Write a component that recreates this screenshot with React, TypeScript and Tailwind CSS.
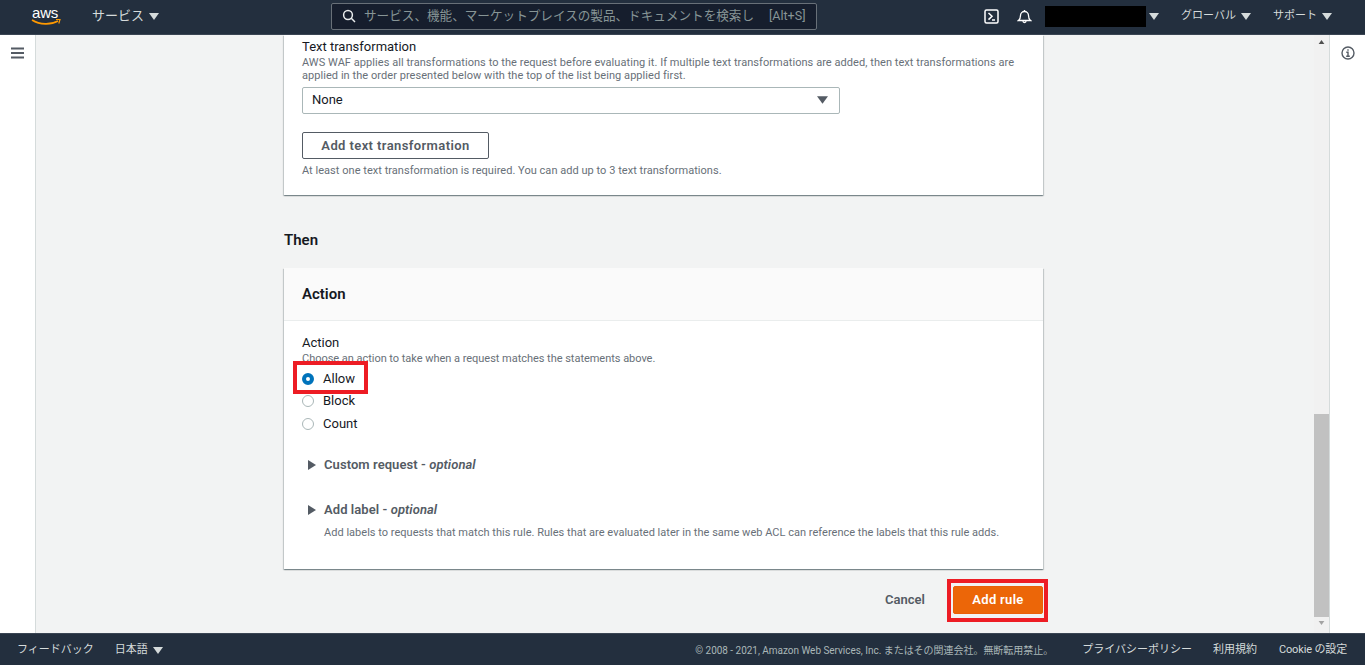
import React from "react";

const font = { fontFamily: 'Roboto, "Noto Sans CJK JP", sans-serif' };

function Caret({ className = "" }: { className?: string }) {
  return (
    <svg className={className} width="10" height="7" viewBox="0 0 10 7" fill="currentColor">
      <path d="M0 0h10L5 7z" />
    </svg>
  );
}

function Expand({ label }: { label: string }) {
  return (
    <div className="flex items-center h-[20px] text-[13px] font-semibold tracking-[0.07px] text-[#545b64] leading-[20px]">
      <svg className="ml-[6px] mr-[8px]" width="8" height="10" viewBox="0 0 8 10" fill="#545b64">
        <path d="M0 0l8 5L0 10z" />
      </svg>
      <span>
        {label} - <i>optional</i>
      </span>
    </div>
  );
}

function Radio({ label, checked = false }: { label: string; checked?: boolean }) {
  return (
    <div className="flex items-center h-[22px] text-[13px] text-[#16191f]">
      {checked ? (
        <span className="w-[12px] h-[12px] rounded-full border-[4px] border-[#0073bb] bg-white" />
      ) : (
        <span className="w-[12px] h-[12px] rounded-full border border-[#aab7b8] bg-white" />
      )}
      <span className="ml-[9px]">{label}</span>
    </div>
  );
}

export default function App() {
  return (
    <div style={font} className="w-[1365px] h-[665px] flex flex-col overflow-hidden bg-white">
      <header className="h-[35px] shrink-0 bg-[#232f3e] border-b border-[#3a4553] pb-[2px] flex items-center text-white">
        <div className="w-[92px] pl-[31px] flex flex-col items-start">
          <span className="text-[15px] leading-[13px] font-medium tracking-[-0.2px] pl-[1px]" style={{ fontFamily: '"Liberation Sans", sans-serif' }}>aws</span>
          <svg width="30" height="7" viewBox="0 0 30 7" fill="none">
            <path d="M1 1c8 5 19 5 26 1" stroke="#f90" strokeWidth="1.6" />
            <path d="M25 0.500l4 0-1.200 4" stroke="#f90" strokeWidth="1.2" />
          </svg>
        </div>
        <span className="text-[13px] text-[#d5dbdb]">サービス</span>
        <Caret className="ml-[5px] text-[#d5dbdb]" />
        <div className="ml-[172px] w-[486px] h-[27px] rounded-[2px] border border-[#687078] bg-[#161e2d] flex items-center pl-[10px] text-[12.6px] text-[#879596] whitespace-nowrap">
          <svg width="14" height="14" viewBox="0 0 14 14" fill="none" stroke="#eaeded" strokeWidth="1.5" className="shrink-0">
            <circle cx="6" cy="6" r="4.400" />
            <path d="M9.300 9.300l3.700 3.700" />
          </svg>
          <span className="ml-[8px] w-[405px]">サービス、機能、マーケットプレイスの製品、ドキュメントを検索し</span>
          <span className="text-[12.5px]">[Alt+S]</span>
        </div>
        <svg className="ml-[167px]" width="15" height="15" viewBox="0 0 15 15" fill="none" stroke="#fff" strokeWidth="1.5">
          <rect x="1" y="1" width="13" height="13" rx="1.500" />
          <path d="M4.500 4l3.500 3.300-3.500 3.300M8 11h3" />
        </svg>
        <svg className="ml-[18px]" width="15" height="15" viewBox="0 0 15 15" fill="none" stroke="#fff" strokeWidth="1.300">
          <path d="M1.500 11.500c2-1.500 2-3 2-5a4 4 0 018 0c0 2 0 3.500 2 5z" />
          <path d="M6 12c0 2 3 2 3 0" />
          <path d="M7.500 1v1.500" />
        </svg>
        <div className="ml-[13px] w-[101px] h-[21px] bg-black" />
        <Caret className="ml-[3px] text-[#d5dbdb]" />
        <span className="ml-[22px] text-[11px] text-[#d5dbdb]">グローバル</span>
        <Caret className="ml-[5px] text-[#d5dbdb]" />
        <span className="ml-[22px] text-[11px] text-[#d5dbdb]">サポート</span>
        <Caret className="ml-[5px] text-[#d5dbdb]" />
      </header>

      <div className="flex-1 flex min-h-0">
        <aside className="w-[36px] shrink-0 border-r border-[#d5dbdb] flex justify-center pt-[12px]">
          <svg width="13" height="12" viewBox="0 0 13 12" stroke="#545b64" strokeWidth="2">
            <path d="M0 1.500h13M0 6h13M0 10.500h13" />
          </svg>
        </aside>

        <main className="flex-1 min-w-0 bg-[#f2f3f3] overflow-hidden flex flex-col pl-[248px]">
          <div className="w-[759px] bg-white shadow-[0_1px_1px_0_rgba(0,28,36,0.3),1px_1px_1px_0_rgba(0,28,36,0.15),-1px_1px_1px_0_rgba(0,28,36,0.15)] px-[18px] pt-[3px] h-[160px]">
            <div className="text-[13px] leading-[18px] text-[#16191f]">Text transformation</div>
            <p className="text-[11px] leading-[13px] tracking-[0.055px] text-[#687078]">
              AWS WAF applies all transformations to the request before evaluating it. If multiple text transformations are added, then text transformations are
              <br />
              applied in the order presented below with the top of the list being applied first.
            </p>
            <div className="mt-[5px] w-[538px] h-[27px] rounded-[2px] border border-[#aab7b8] pb-[2px] flex items-center justify-between pl-[9px] pr-[11px] text-[13px] text-[#16191f]">
              <span>None</span>
              <Caret className="text-[#545b64] w-[11px] h-[8px] mt-[1px]" />
            </div>
            <button className="mt-[18px] block w-[187px] h-[27px] rounded-[2px] border border-[#545b64] text-[13px] font-semibold tracking-[0.4px] text-[#545b64]">
              Add text transformation
            </button>
            <p className="mt-[5px] text-[11px] leading-[14px] tracking-[0.035px] text-[#687078]">
              At least one text transformation is required. You can add up to 3 text transformations.
            </p>
          </div>

          <h2 className="mt-[35px] ml-0 text-[15px] leading-[20px] font-semibold text-[#16191f]">Then</h2>

          <section className="mt-[18px] w-[759px] h-[301px] bg-white shadow-[0_1px_1px_0_rgba(0,28,36,0.3),1px_1px_1px_0_rgba(0,28,36,0.15),-1px_1px_1px_0_rgba(0,28,36,0.15)]">
            <div className="h-[53px] bg-[#fafafa] border-b border-[#eaeded] flex items-center px-[18px] text-[15px] font-semibold text-[#16191f]">
              Action
            </div>
            <div className="px-[18px] pt-[13px]">
              <div className="text-[13px] leading-[18px] text-[#16191f]">Action</div>
              <p className="text-[11px] leading-[12px] mt-[1px] tracking-[-0.03px] text-[#687078]">Choose an action to take when a request matches the statements above.</p>
              <div className="mt-[3px]">
                <Radio label="Allow" checked />
                <Radio label="Block" />
                <div className="mt-[1px]"><Radio label="Count" /></div>
              </div>
              <div className="mt-[20px]"><Expand label="Custom request" /></div>
              <div className="mt-[25px]"><Expand label="Add label" /></div>
              <p className="mt-[6px] ml-[22px] text-[11px] leading-[14px] tracking-[0.02px] text-[#687078]">
                Add labels to requests that match this rule. Rules that are evaluated later in the same web ACL can reference the labels that this rule adds.
              </p>
            </div>
          </section>

          <div className="w-[759px] flex items-center justify-end mt-[17px]">
            <span className="text-[13px] font-semibold text-[#545b64] mr-[28px]">Cancel</span>
            <button className="w-[90px] h-[28px] rounded-[2px] bg-[#ec6608] border border-[#eb5f07] text-[13px] font-semibold tracking-[0.3px] text-white">Add rule</button>
          </div>
        </main>

        <div className="w-[15px] shrink-0 bg-[#f1f1f1] flex flex-col">
          <Caret className="mx-auto mt-[5px] w-[7px] h-[4px] rotate-180 text-[#505050]" />
          <div className="mt-[370px] h-[203px] bg-[#c1c1c1]" />
          <Caret className="mx-auto mt-[4px] w-[7px] h-[4px] text-[#a3a3a3]" />
        </div>
        <aside className="w-[36px] shrink-0 border-l border-[#d5dbdb] flex justify-center pt-[11px]">
          <svg width="14" height="14" viewBox="0 0 14 14" fill="none" stroke="#545b64" strokeWidth="1.400">
            <circle cx="7" cy="7" r="6" />
            <path d="M5.300 6.300h1.700v3.700M5.200 10.200h3.600M7 3.200v1.600" />
          </svg>
        </aside>
      </div>

      <footer className="h-[32px] shrink-0 bg-[#232f3e] border-t border-[#3a4553] pt-[2px] flex items-center text-[11px] text-[#d5dbdb]">
        <span className="ml-[17px]">フィードバック</span>
        <span className="ml-[21px]">日本語</span>
        <Caret className="ml-[5px]" />
        <span className="ml-auto text-[10px] tracking-[-0.03px] text-[#aab7b8]">© 2008 - 2021, Amazon Web Services, Inc. またはその関連会社。無断転用禁止。</span>
        <span className="ml-[29px]">プライバシーポリシー</span>
        <span className="ml-[21px]">利用規約</span>
        <span className="ml-[22px] mr-[18px] tracking-[-0.15px]">Cookie の設定</span>
      </footer>

      <div className="absolute left-[293px] top-[361px] w-[75px] h-[33px] border-[4px] border-[#ed1c24] pointer-events-none" />
      <div className="absolute left-[947px] top-[579px] w-[101px] h-[43px] border-[4px] border-[#ed1c24] pointer-events-none" />
    </div>
  );
}
